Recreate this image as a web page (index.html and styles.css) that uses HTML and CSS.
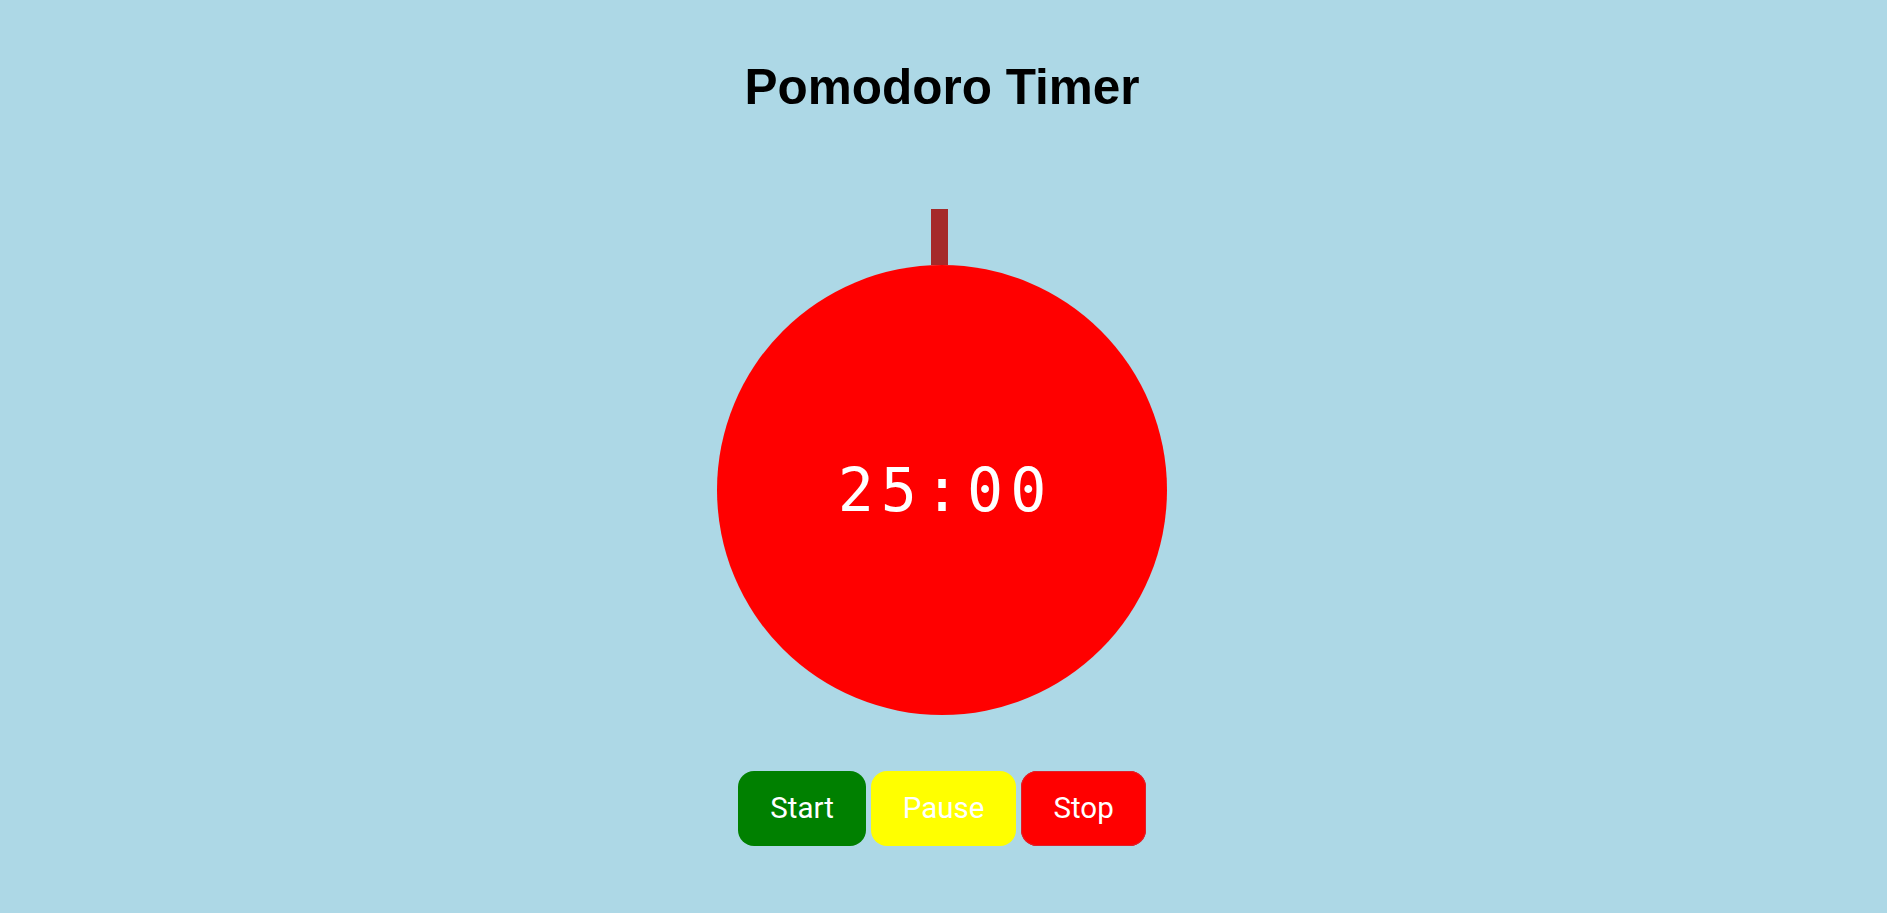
FILE: index.html
```html
<!DOCTYPE html>
<html lang="en">
<head>
<meta charset="utf-8">
<title>Pomodoro Timer</title>
<link rel="stylesheet" href="styles.css">
</head>
<body>
<main class="app">
  <h1 class="title">Pomodoro Timer</h1>
  <div class="tomato">
    <div class="stem"></div>
    <div class="face">
      <span class="time">25:00</span>
    </div>
  </div>
  <div class="controls">
    <button class="btn btn-start">Start</button>
    <button class="btn btn-pause">Pause</button>
    <button class="btn btn-stop">Stop</button>
  </div>
</main>
</body>
</html>
```

FILE: styles.css
```css
html, body {
  margin: 0;
  padding: 0;
  background: #add8e6;
}

body {
  font-family: "Liberation Sans", Arial, sans-serif;
  min-height: 100vh;
}

.app {
  display: flex;
  flex-direction: column;
  align-items: center;
  padding-top: 59px;
  padding-right: 3px;
}

.title {
  margin: 0;
  font-size: 49.5px;
  line-height: 56px;
  font-weight: bold;
  color: #000;
}

.tomato {
  margin-top: 94px;
  display: flex;
  flex-direction: column;
  align-items: center;
}

.stem {
  width: 17px;
  height: 56px;
  background: #a52a2a;
  margin-right: 5px;
}

.face {
  width: 450px;
  height: 450px;
  border-radius: 50%;
  background: #ff0000;
  display: flex;
  align-items: center;
  justify-content: center;
}

.time {
  font-family: "DejaVu Sans Mono", "Liberation Mono", monospace;
  font-size: 60px;
  letter-spacing: 7px;
  color: #fff;
  line-height: 1;
  margin-left: 7px;
}

.controls {
  margin-top: 56px;
  display: flex;
  gap: 5px;
}

.btn {
  font-family: Roboto, "Liberation Sans", sans-serif;
  font-size: 29.5px;
  color: #fff;
  border: none;
  border-radius: 16px;
  padding: 20px 32px;
  line-height: 35px;
  cursor: pointer;
}

.btn-start { background: #008000; }
.btn-pause { background: #ffff00; }
.btn-stop { background: #ff0000; box-shadow: inset 0 0 0 1px #e0202a; }
```
